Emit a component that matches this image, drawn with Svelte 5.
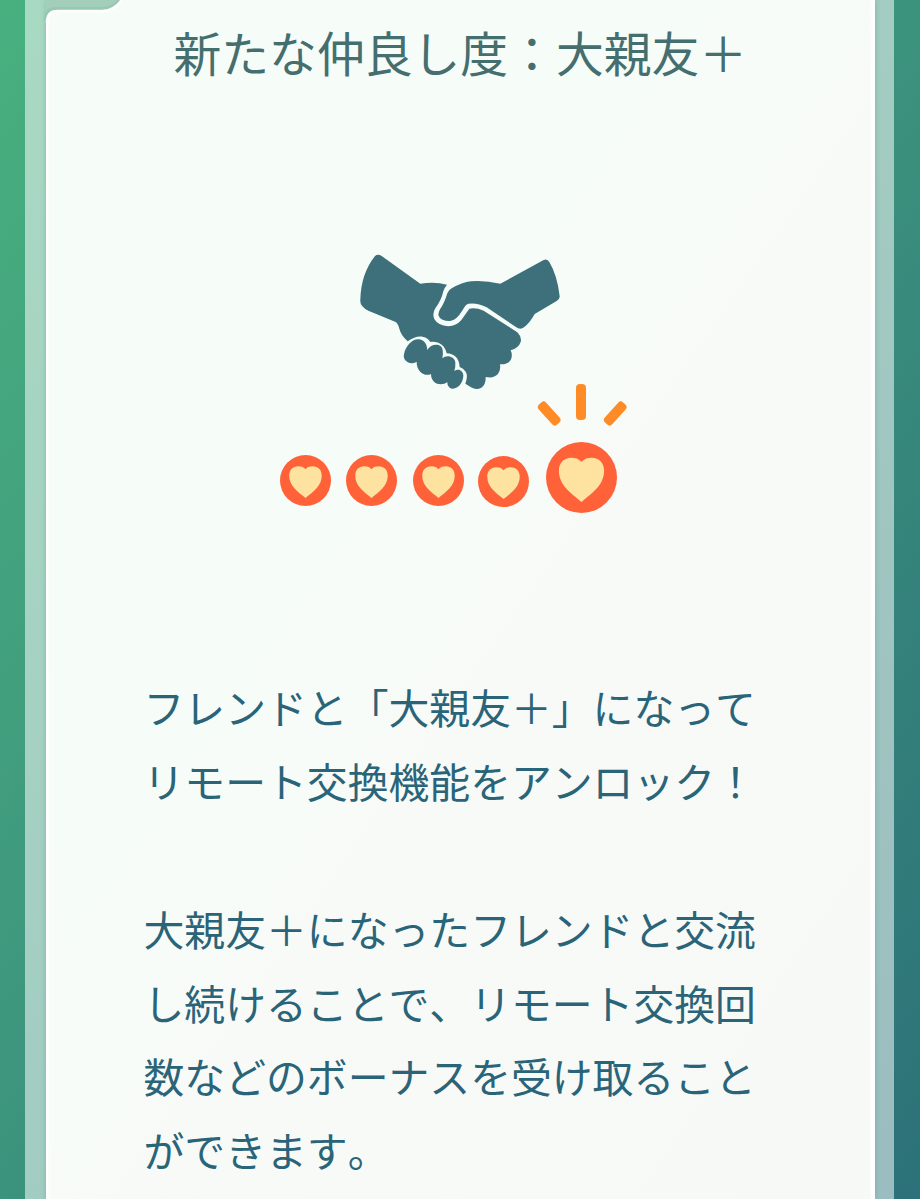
<script>
  const hearts = [
    { size: 51, left: 0, top: 13 },
    { size: 51, left: 15, top: 13 },
    { size: 51, left: 15.5, top: 13 },
    { size: 51, left: 14.5, top: 13.5 },
    { size: 71, left: 17, top: 0 }
  ];
  const lines = [
    'フレンドと「大親友＋」になって',
    'リモート交換機能をアンロック！',
    '',
    '大親友＋になったフレンドと交流',
    'し続けることで、リモート交換回',
    '数などのボーナスを受け取ること',
    'ができます。'
  ];
</script>

<main class="screen">
  <div class="frame">
    <section class="card">
      <h1>新たな仲良し度：大親友＋</h1>

      <svg class="handshake" viewBox="0 0 690 495" aria-hidden="true">
        <g fill="#3d707b">
          <path d="M90 48Q99 41 110 48L226 131Q270 124 306 134Q299 142 295 154Q289 181 271 205Q261 221 268 237Q278 256 310 259Q334 258 349 240L373 206Q393 202 416 212L517 277Q531 291 527 306Q521 324 497 331Q504 346 497 360Q488 374 465 373Q468 391 458 403Q446 416 422 411Q423 434 409 443Q394 452 378 442L361 431Q370 407 362 395Q355 384 344 381C343 353 326 341 305 340C299 315 281 303 256 306C245 288 218 281 188 304Q168 286 163 266Q159 251 152 246L70 212Q43 198 46 178Q48 101 90 48Z"/>
          <path d="M466 131L596 60Q607 55 613 66Q637 106 644 169Q645 177 635 183L569 222Q555 248 537 262Q526 270 514 262L425 202Q397 187 370 191Q361 194 353 210Q334 242 315 243Q285 243 280 225Q280 218 285 208Q298 190 307 160Q310 150 320 145Q351 127 378 124Q420 121 466 131Z"/>
          <path d="M177 343C182 316 203 297 220 298C238 299 246 312 247 330C257 311 290 308 293 330Q295 343 292 355C304 343 329 349 331 367Q332 381 328 393C341 384 355 393 355 407C354 431 337 447 320 446Q307 442 307 427C289 439 258 433 258 402C241 411 214 396 215 365C196 377 172 363 177 343Z"/>
        </g>
      </svg>

      <div class="level">
        <svg class="rays" viewBox="0 0 90 44" aria-hidden="true">
          <g fill="#ff8b27">
            <rect x="39" y="1" width="10" height="36" rx="4"/>
            <rect x="-5" y="-13.5" width="10" height="27" rx="3.5" transform="translate(12.2 30.5) rotate(-42)"/>
            <rect x="-5" y="-13.5" width="10" height="27" rx="3.5" transform="translate(78.2 30.5) rotate(42)"/>
          </g>
        </svg>
        {#each hearts as h}
          <svg
            class="heart"
            viewBox="0 0 154 154"
            style="width:{h.size}px;height:{h.size}px;margin-left:{h.left}px;margin-top:{h.top}px"
            aria-hidden="true"
          >
            <circle cx="77" cy="77" r="77" fill="#ff6238"/>
            <path d="M77 43C83 36 91 34 99 34C115 34 126 45 126 62C126 94 101 110 77 130C53 110 28 94 28 62C28 45 39 34 55 34C63 34 71 36 77 43Z" fill="#fde2a0"/>
          </svg>
        {/each}
      </div>

      <div class="message">
        {#each lines as line}
          <p>{line}</p>
        {/each}
      </div>
    </section>
    <svg class="notch" viewBox="0 0 110 70" aria-hidden="true">
      <path d="M20 0H95Q88 10 77 10H32Q21 10 21 22H20Z" fill="#a3cfba"/>
      <path d="M94 0Q88 8.5 76 8.5H31Q20 8.5 20 20" fill="none" stroke="#90c5ad" stroke-width="3" opacity=".6"/>
      <path d="M97 0Q89 11 77 11H33Q22 11 22 23" fill="none" stroke="#fff" stroke-width="2.5"/>
    </svg>
  </div>
</main>

<style>
  :global(body) { margin: 0; }
  .screen {
    box-sizing: border-box;
    width: 920px;
    height: 1199px;
    overflow: hidden;
    padding: 0 26px 0 25px;
    background: linear-gradient(to bottom right, #48b07f, #3c937d 50%, #2c7179);
    font-family: "Noto Sans CJK JP", sans-serif;
    font-kerning: none;
  }
  .frame {
    position: relative;
    box-sizing: border-box;
    height: 1199px;
    padding: 0 19px 0 20.5px;
    background: rgba(255, 255, 255, .53);
  }
  .card {
    box-sizing: border-box;
    height: 1199px;
    display: flex;
    flex-direction: column;
    background: linear-gradient(to bottom right, #f6fcf8, #f7fcf8 48%, #f8faf7 54%, #f7f9f7);
    box-shadow: inset 5px 0 3px -2px #fff, inset -6px 0 3px -2px #fff, 0 0 5px rgba(80, 150, 130, .45);
  }
  h1 {
    margin: 16px 0 0;
    padding-left: 128px;
    font-size: 47.8px;
    line-height: 72px;
    font-weight: 400;
    white-space: nowrap;
    color: #456e6e;
  }
  .handshake {
    width: 230px;
    height: 165px;
    margin: 152px 0 0 299.5px;
    flex: none;
  }
  .level {
    position: relative;
    display: flex;
    align-items: flex-start;
    height: 72px;
    margin: 37px 0 0 234.5px;
  }
  .heart { flex: none; }
  .rays {
    position: absolute;
    left: 256.5px;
    top: -59px;
    width: 90px;
    height: 44px;
    overflow: visible;
  }
  .message {
    margin: 156px 0 0 98px;
    color: #2a6479;
    font-size: 40.83px;
    line-height: 74px;
  }
  p { height: 73.9px; margin: 0; white-space: nowrap; }
  .notch {
    position: absolute;
    left: 0;
    top: 0;
    width: 110px;
    height: 70px;
  }
</style>
